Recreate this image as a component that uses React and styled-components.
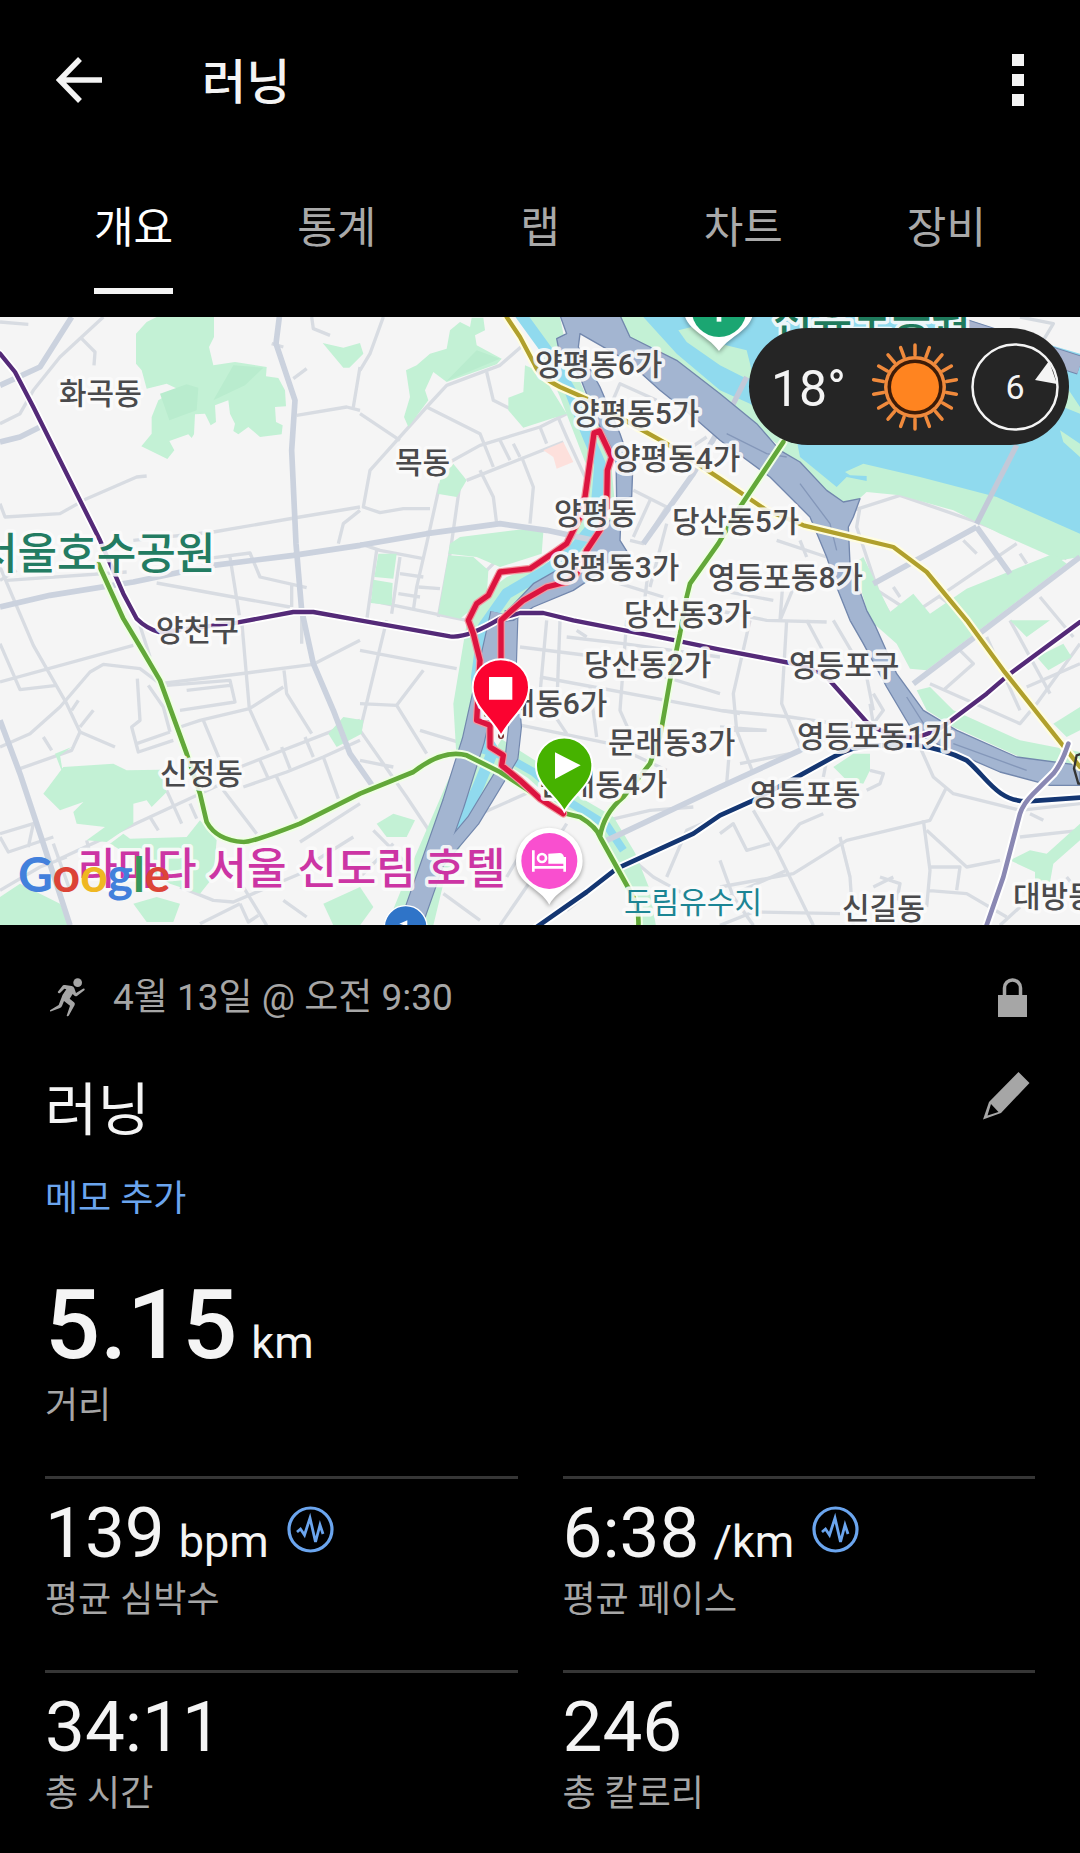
import React, { useState } from "react";
import styled, { createGlobalStyle } from "styled-components";

const GlobalStyle = createGlobalStyle`
  *, *::before, *::after { box-sizing: border-box; }
  body {
    margin: 0;
    background: #000;
    color: #f4f4f4;
    font-family: Roboto, "Noto Sans CJK KR", sans-serif;
  }
  button { border: 0; margin: 0; padding: 0; background: none; color: inherit; font: inherit; cursor: pointer; }
  svg { display: block; }
  h1, h2, p, dl, dd, dt { margin: 0; font-weight: 400; }
`;

const Page = styled.div`
  min-height: 100vh;
  background: #000;
`;

/* ---------- top bar ---------- */

const TopBar = styled.header`
  display: flex;
  align-items: center;
  height: 160px;
  padding: 0 56px;
`;

const IconButton = styled.button`
  display: flex;
  flex: none;
  align-items: center;
  justify-content: center;
  color: #f4f4f4;
`;

const EditButton = styled(IconButton)`
  padding: 0 5px 30px 0;
  color: #a6a6a6;
`;

const ScreenTitle = styled.h1`
  flex: 1;
  margin-left: 98px;
  padding-top: 6px;
  font-size: 48px;
  line-height: 60px;
  font-weight: 500;
`;

const Tabs = styled.nav`
  display: grid;
  grid-template-columns: repeat(5, 1fr);
  height: 157px;
  padding: 0 32px;
`;

const Tab = styled.button`
  display: flex;
  align-items: flex-end;
  justify-content: center;
  padding-bottom: 23px;
`;

const TabLabel = styled.span`
  padding-bottom: 30px;
  border-bottom: 6px solid ${(p) => (p.$active ? "#f4f4f4" : "transparent")};
  color: ${(p) => (p.$active ? "#fff" : "#a9a9a9")};
  font-size: 43px;
  line-height: 60px;
`;

/* ---------- map ---------- */

const MapPanel = styled.section`
  position: relative;
  overflow: hidden;
  background: #f5f5f5;
`;

const MapSvg = styled.svg`
  width: 100%;
  height: auto;
`;

const MapText = styled.text`
  font-family: Roboto, "Noto Sans CJK KR", sans-serif;
  font-size: ${(p) => (p.$large ? 43 : 30)}px;
  font-weight: ${(p) => (p.$regular ? 400 : 500)};
  fill: ${(p) => p.$fill || "#4a4a4c"};
  stroke: #fbfbfb;
  stroke-opacity: 0.9;
  stroke-width: 7px;
  stroke-linejoin: round;
  paint-order: stroke;
`;

const GoogleText = styled.text`
  font-family: Lato, sans-serif;
  font-size: 48px;
  font-weight: 700;
`;

const Weather = styled.div`
  position: absolute;
  top: 11px;
  right: 11px;
  display: flex;
  align-items: center;
  gap: 12px;
  width: 320px;
  height: 117px;
  padding: 0 10px 0 22px;
  border-radius: 59px;
  background: #252525;
`;

const Temperature = styled.span`
  flex: 1;
  padding-top: 4px;
  font-size: 50px;
`;

const Wind = styled.div`
  display: grid;
  place-items: center;
  font-size: 34px;
  font-weight: 400;
  > * { grid-area: 1 / 1; }
`;

/* ---------- activity ---------- */

const Activity = styled.main`
  padding: 43px 45px 33px;
`;

const Row = styled.div`
  display: flex;
  align-items: center;
  justify-content: space-between;
  margin-top: ${(p) => p.$top || 0}px;
`;

const When = styled.p`
  display: flex;
  align-items: center;
  gap: 18px;
  color: #a6a6a6;
  font-size: 37px;
  line-height: 60px;
`;

const LockSlot = styled.span`
  padding: 0 8px 2px 0;
`;

const ActivityName = styled.h2`
  font-size: 57px;
  line-height: 80px;
`;

const NoteButton = styled.button`
  display: block;
  margin-top: 23px;
  color: #6ba5ee;
  font-size: 36px;
  line-height: 50px;
`;

const Stats = styled.dl`
  display: grid;
  grid-template-columns: 1fr 1fr;
  column-gap: 45px;
  row-gap: 45px;
  margin-top: 45px;
`;

const Stat = styled.div`
  display: flex;
  flex-direction: column-reverse;
  justify-content: flex-end;
  ${(p) =>
    p.$hero
      ? "grid-column: 1 / -1;"
      : "border-top: 3px solid #363636; padding-top: 12px;"}
`;

const StatLabel = styled.dt`
  color: #a6a6a6;
  font-size: 36px;
  line-height: 50px;
`;

const StatValue = styled.dd`
  display: flex;
  align-items: baseline;
  gap: 14px;
  font-size: ${(p) => (p.$hero ? 97 : 71)}px;
  font-weight: ${(p) => (p.$hero ? 500 : 400)};
  line-height: ${(p) => (p.$hero ? 112 : 84)}px;
`;

const Unit = styled.span`
  font-size: 45px;
  font-weight: 400;
  line-height: 45px;
`;

const PulseSlot = styled.span`
  align-self: center;
  margin: 0 0 8px 4px;
`;

/* ---------- icons ---------- */

const BackIcon = () => (
  <svg width="48" height="46" viewBox="0 0 48 46" fill="none" stroke="currentColor" strokeWidth="5.5">
    <path d="M24 2 3.500 23 24 44M4 23H46" />
  </svg>
);

const MoreIcon = () => (
  <svg width="12" height="52" viewBox="0 0 12 52" fill="currentColor">
    <path d="M0 0h12v12H0zM0 20h12v12H0zM0 40h12v12H0z" />
  </svg>
);

const RunnerIcon = () => (
  <svg width="50" height="50" viewBox="0 0 150 150" fill="#a6a6a6">
    <circle cx="98" cy="29" r="13" />
    <path d="M38 57 54 37Q56 35 60 36L80 39Q86 40 88 46L93 60 114 47Q120 46 119 51L96 69Q90 71 87 67L83 63 74 77 87 88Q91 91 89 96L72 127Q69 132 65 128L75 98 57 84 51 99Q49 103 45 105L19 115Q14 117 15 112L41 96 50 73Q51 67 56 61L64 49 58 47 45 60Q40 62 38 57Z" />
  </svg>
);

const LockIcon = () => (
  <svg width="29" height="39" viewBox="0 0 29 39">
    <path d="M0 17h29v22H0z" fill="#a6a6a6" />
    <path d="M6.500 18V10a8 8 0 0 1 16 0v8" fill="none" stroke="#a6a6a6" strokeWidth="3.500" />
  </svg>
);

const PencilIcon = () => (
  <svg width="47" height="48" viewBox="0 0 47 48" fill="currentColor" fillRule="evenodd">
    <path d="M35.500 0 46.500 11 18 41 0 47.500 6 30ZM8 32 4.500 43.500 15.500 40Z" />
  </svg>
);

const PulseIcon = () => (
  <svg width="47" height="47" viewBox="0 0 47 47" fill="none" stroke="#6ba5ee">
    <circle cx="23.500" cy="23.500" r="21.500" strokeWidth="3.200" />
    <path d="M10 26 13.500 23 17.500 29 23 12 28.500 36 33 19 36 28" strokeWidth="2.800" />
  </svg>
);

const SunIcon = () => (
  <svg width="88" height="88" viewBox="-44 -44 88 88" role="img" aria-label="맑음">
    {Array.from({ length: 18 }, (_, i) => (
      <path key={i} d="M0-32V-42" transform={`rotate(${i * 20})`} stroke="#f08a3c" strokeWidth="3.500" strokeLinecap="round" />
    ))}
    <circle r="31" fill="#f08a3c" />
    <circle r="27.500" fill="#3d1c08" />
    <circle r="24" fill="#ff8420" />
  </svg>
);

const CompassIcon = () => (
  <svg width="88" height="88" viewBox="-44 -44 88 88">
    <circle r="42.500" fill="none" stroke="#f4f4f4" strokeWidth="2.500" />
    <path d="M34-26 42-3 20-7Z" fill="#f4f4f4" />
  </svg>
);

/* ---------- map data ---------- */

const PARKS = [
  "M408 70 440 35 470 20H642V80L627 110 640 165 705 155 800 170 798 198 835 203 855 240 858 288 825 290 828 335 848 345 845 372 780 380 745 350 715 372 700 362 705 340 690 310 685 270 645 285 648 335 632 345 615 310 585 312 582 372 575 383 565 372 508 392 523 420 502 446 424 408 455 370V320L475 270 532 235 500 220 440 235 425 180 408 160Z",
  "M968 98 1030 112 1080 98 1090 130 1048 172 1030 172Z",
  "M1350 60 1380 35 1410 50 1415 22H1450L1455 60 1425 75 1430 105 1505 145 1490 162 1340 215 1300 185 1275 240 1285 270 1225 350 1212 320 1230 260 1218 180 1250 165 1290 130 1340 115Z",
  "M1575 165 1622 185 1700 310 1570 352 1525 300V262L1570 245Z",
  "M1320 510 1360 460 1400 510 1370 560 1312 550Z",
  "M1350 700 1380 680 1580 655 1630 665 1625 730 1500 770 1430 740 1345 730Z",
  "M1345 735 1420 740 1465 780 1460 860 1380 925 1315 910Z",
  "M1135 730H1190L1180 805 1123 800ZM1120 808 1178 818 1175 885 1113 878Z",
  "M130 1450 190 1370 340 1360 380 1380 480 1378 500 1445 455 1490 440 1470 400 1480V1540L320 1595 260 1590 315 1550 230 1540 220 1505 250 1475 180 1500ZM165 1330 215 1310 180 1335 190 1395Z",
  "M330 1600 370 1570 390 1585 560 1580 600 1530 650 1590 640 1700 600 1750 510 1720 380 1630Z",
  "M0 1760 60 1720 180 1780 210 1845H0ZM400 1780 470 1760 540 1780 520 1835H440Z",
  "M970 1780 1080 1730 1120 1790 1080 1845H1000Z",
  "M985 1270 1030 1220 1090 1230 1085 1270 1010 1310Z",
  "M1130 1540 1180 1510 1245 1530 1220 1580 1160 1580Z",
  "M2670 905 2740 850 2790 910 2900 835 3160 730 3200 760 2780 1080 2730 1075 2690 1000 2610 930 2560 760 2590 740Z",
  "M3030 930H3150L3080 980ZM3110 1040 3190 1000 3215 1040 3145 1080ZM3160 1240 3240 1190V1260L3200 1280Z",
  "M2750 1140 2790 1130 2860 1200 3060 1290 3240 1325V1368L3070 1345 2860 1250 2780 1200Z",
  "M2500 1370 2560 1330 2610 1330V1380L2590 1420 2540 1410Z",
  "M3030 1650 3090 1620 3140 1630 3240 1540V1590L3160 1660 3150 1715H3105V1685Z",
];

const MAJOR_ROADS = [
  "M0 890 150 855 400 815 640 765 880 735 1080 705 1280 670 1500 640 1640 660 1780 690",
  "M838 20 828 100 885 270 875 420 888 700 905 900 940 1060 1000 1200 1050 1330 1120 1430",
  "M0 1230 60 1390 130 1600 210 1845",
  "M0 225 120 170 215 20M0 395 60 380 120 350",
  "M2160 1430 2400 1320 2560 1240M1800 1600 2160 1430",
  "M2620 820 2930 650M2930 650 3030 790",
  "M2740 1120 3240 740M1930 700 2080 490 2150 370",
];

const ROADS = [
  "M0 1310 90 1270 180 1190 270 1085 310 1062 420 1075 480 1120 740 1088 940 1062 1080 990",
  "M0 35 85 42M310 20 180 140 100 240 60 310 0 340M245 85 285 125 282 165",
  "M0 580 15 620 180 610 260 565 410 500 440 497",
  "M400 690 640 665 900 620 1080 590M20 810 380 785M0 810 50 780",
  "M935 20 940 55 990 75M815 100 850 110M880 205 920 175M890 315 1040 290 1080 300M1060 290 1080 170",
  "M1080 600 1030 640 1015 700M620 745 750 728 780 800 920 832M690 740 718 915M470 818 700 860 870 890M875 825V890M905 920V1000",
  "M0 770 100 1005 200 1180 240 1265M0 1000 60 1138 170 1125M0 1115 400 1005M415 930 450 1040",
  "M240 1265 345 1310M240 1265 215 1320 60 1375M215 1200 235 1170M240 1250 280 1200M130 1280 155 1320",
  "M412 1105 420 1230 395 1250 415 1325 520 1290M410 1300 510 1265M445 1125 490 1190 510 1265",
  "M500 1125 690 1110 705 1175 540 1200M560 1140 690 1125M725 930 748 1195 600 1230 540 1250",
  "M852 1080 860 1150 935 1270M748 1195 850 1130M748 1195 805 1320M610 1230 660 1350",
  "M720 1370 1080 1230M730 1430 860 1385 970 1340 1080 1290M780 1350 805 1405M845 1310 870 1375M915 1280 940 1340M970 1340 1015 1465M830 1400 890 1525",
  "M170 1650 720 1395 M260 1590 270 1630M450 1520 475 1560M500 1440 545 1540M570 1480 590 1525M670 1440 770 1570",
  "M0 1570 100 1540 85 1610M0 1580 25 1625 160 1580M0 1740 120 1670 200 1640M160 1600 210 1740",
  "M900 1595 1080 1480M540 1730 640 1770 700 1775 900 1690M720 1780 745 1835 775 1815M730 1730 800 1845M850 1770 920 1820M900 1680 1060 1580M600 1840 720 1780",
  "M1150 20 1110 130 1080 180M1080 310 1200 390M1580 95 1500 165 1340 225 1280 290 1110 480 1090 590 1140 607 1210 595 1290 595",
  "M1280 290 1440 370 1480 470M1460 185 1480 270 1540 300M1350 455 1440 405 1620 350 1700 310M1400 510 1690 395M1320 520 1280 700 1250 830 1240 900M1380 520 1350 730 1315 920",
  "M1440 480 1480 560 1490 640M1565 440 1600 530 1590 640M1500 390 1530 450M1620 350 1640 400M1540 400 1560 440M1635 230 1700 380 1755 500",
  "M1080 700 1140 720 1270 745M1130 720 1100 930M1200 740 1175 910M1200 790 1270 800M1195 850 1260 860M1255 830 1320 835M1110 870 1400 930M1460 780 1500 740 1620 700",
  "M2240 570 2300 600M1830 290 1860 220 1970 270M1900 540 2000 590 1930 700 1890 690M1950 570 1900 680M2060 420 2120 380",
  "M2100 890 2300 930 2480 935M1700 980 1870 1000 2160 1040M1560 1010 1800 1040 2160 1150M1620 1100 2160 1200 2370 1220 2640 1260",
  "M1640 930 1620 1150 1700 1270M1880 930 1860 1200 1900 1290M1680 930 1670 1200M1770 1130 1790 1280M1540 1240 1830 1300 2000 1380M1730 960 1760 980",
  "M1840 700 1860 820 1990 860M1950 740 1930 900M2000 640 1950 830M2330 690 2480 740M2350 800 2340 930M2400 690 2420 740M2410 760 2340 930M2160 840 2320 870",
  "M2250 930 2200 1150 2210 1260 2260 1390M2360 930 2345 1180 2400 1310M2420 930 2500 1080M2500 930 2600 1100 2620 1200M2200 1260 2290 1260M2160 1250 2300 1260",
  "M2190 1300 2180 1420M2220 1360 2370 1330M2160 1200 2220 1210",
  "M1080 1020 1370 1075M1160 930 1080 1260M1080 1180 1190 1185 1280 1330M1190 1185 1270 1080M1260 1260 1390 1300 1620 1400",
  "M1080 1260 1220 1460 1300 1580M1080 1350 1180 1370M1420 1520 1600 1440M1700 1540 1600 1700 1500 1845M1520 1700 1580 1600M1780 1540 1950 1500 2080 1490",
  "M2000 1700 2060 1560 2200 1500M1700 1800 1880 1660 2100 1560M1900 1650 1960 1700 2050 1750M1330 1750 1440 1830M1120 1560 1240 1680M1180 1600 1080 1700",
  "M2260 1500 2330 1620 2440 1845M2160 1570 2200 1540 2240 1620 2310 1600M2330 1620 2400 1540 2470 1510M2160 1730 2380 1690 2540 1590 2790 1530 2840 1430",
  "M2520 1580 2550 1700 2560 1845M2160 1650 2200 1760 2260 1845M2160 1845 2260 1805 2520 1810M2160 1770 2360 1680M2760 1310 2800 1400 2860 1450 3060 1500 3240 1480",
  "M2770 1530 2790 1680 2780 1790M2780 1560 2900 1670 3000 1650M2790 1670H2880L2870 1740M2780 1740 2900 1750 3020 1820M3060 1580 3240 1560M3090 1510 3130 1530",
  "M2580 590 2570 650 2640 860 2680 930 2760 1070M2560 600 2700 555 2930 635 3100 700 3200 745",
  "M2600 820 2740 910 2830 850 3050 700M2680 830 2700 860M2890 690 2930 730M3060 730 3080 760M2820 860 2900 920M2790 1120 3060 1240 3110 1180 3240 1000",
  "M2880 1020 2920 1060 2830 1140M2960 980 3060 1200M3030 930 3150 1150M3120 860 3220 980M3080 1130 3240 1060M2620 1150 2650 1200 2620 1240 2610 1180",
  "M2480 1350 2470 1400M2610 1380 2650 1390 2640 1420 2600 1440M2640 1700 2700 1720 2690 1770M2620 1730 2680 1700M3200 1700 3240 1750M3000 1845 3060 1790",
];

const GREEN_LINE =
  "M295 760 370 925 430 1025 480 1110 560 1330 600 1450 620 1535Q650 1590 730 1595 760 1595 900 1540L1080 1450 1240 1385Q1330 1315 1400 1335L1500 1385 1600 1450 1690 1508 1740 1520Q1790 1550 1800 1580L1850 1670 1900 1760Q1918 1800 1915 1850M2350 395 2220 590 2155 700 2070 820 2060 860 2040 970 2010 1110 1980 1280 1950 1360 1870 1460Q1810 1510 1800 1580";
const PURPLE_LINE =
  "M0 130 45 185 100 290 200 490 300 690 370 850 410 925Q440 955 480 966L710 937 880 905H940L1080 930 1350 978Q1400 985 1500 925L1560 908H1630L1720 930 2000 985 2160 1018 2370 1058Q2440 1070 2480 1100L2600 1235Q2650 1275 2740 1282 2800 1270 2840 1240L2960 1150 3030 1090 3240 935";
const OLIVE_LINE =
  "M1520 20 1560 80 1605 165Q1620 200 1680 230L1760 265 1910 350 2000 400 2160 505 2300 600 2410 645 2680 710 2780 785 2900 930 3010 1080 3240 1370";
const NAVY_LINE =
  "M1610 1850 1760 1745 1850 1675 2080 1570 2160 1515 2260 1470 2400 1395 2500 1340Q2560 1305 2640 1305H2750Q2830 1315 2900 1350C2960 1400 2990 1472 3080 1473L3240 1462";
const LILAC_LINE = "M2958 1850 3010 1700 3060 1510Q3070 1480 3100 1450L3160 1390Q3185 1360 3205 1300";
const ROUTE =
  "M1503 1060V930L1530 905 1570 870 1640 830 1700 815 1730 790 1760 720 1800 660 1820 600 1822 480 1835 440 1798 362 1782 368 1755 560 1740 620 1700 700 1650 735 1590 775 1500 785 1465 855 1430 880 1405 930 1420 970 1440 1050 1430 1230 1470 1245V1310L1510 1335 1505 1365 1560 1410 1620 1465 1690 1510";

const PLACES = [
  [59, 87, "화곡동"],
  [395, 156, "목동"],
  [535, 58, "양평동6가"],
  [572, 107, "양평동5가"],
  [613, 152, "양평동4가"],
  [554, 207, "양평동"],
  [552, 261, "양평동3가"],
  [672, 215, "당산동5가"],
  [708, 271, "영등포동8가"],
  [624, 308, "당산동3가"],
  [584, 358, "당산동2가"],
  [789, 359, "영등포구"],
  [480, 397, "문래동6가"],
  [608, 436, "문래동3가"],
  [540, 478, "문래동4가"],
  [797, 430, "영등포동1가"],
  [750, 488, "영등포동"],
  [160, 467, "신정동"],
  [156, 324, "양천구"],
  [842, 602, "신길동"],
  [1013, 590, "대방동"],
];

function CityMap() {
  return (
    <MapSvg viewBox="0 0 1080 608" role="img" aria-label="러닝 경로 지도">
      <svg width="1080" height="608" viewBox="0 20 3240 1824" fill="none" strokeLinejoin="round">
        <rect y="20" width="3240" height="1830" fill="#f5f5f5" />
        <g stroke="#d8dce2" strokeWidth="10">
          {ROADS.map((d) => (
            <path key={d} d={d} />
          ))}
        </g>

        {/* river banks and water */}
        <path d="M1860 20H3240V740L3180 750 3000 670 2860 600 2700 555 2600 545 2550 590H2480L2330 400 2100 230 1900 120Z" fill="#c3f1d5" />
        <path d="M1930 20H3240V670L2990 560 2760 500 2590 460 2535 485 2550 495 2600 497V512L2540 500 2510 530 2400 440 2390 390 2250 280 2160 240 2030 130Z" fill="#90daee" />
        <path d="M2035 60 2075 50 2160 100 2240 120 2260 200 2240 205 2160 165 2060 95ZM3180 360 3240 400V440L3190 395ZM3200 230 3240 290V310L3190 290Z" fill="#c3f1d5" />
        <path d="M2880 20H3240V130L3000 60Z" fill="#f5f5f5" />
        <path d="M3060 20 3160 40 3130 90" stroke="#d5dae0" strokeWidth="10" />
        <path d="M2880 50 3240 165" stroke="#7287ad" strokeWidth="58" />
        <path d="M2880 50 3240 165" stroke="#a8b4cf" strokeWidth="52" />
        <path d="M3050 405 2930 640M2240 200 2190 300" stroke="#c3c9d8" strokeWidth="16" />

        {PARKS.map((d) => (
          <path key={d} d={d} fill="#c3f1d5" />
        ))}
        <path d="M480 250 560 222 595 232 590 300 508 330ZM700 165 790 172 735 225 640 270Z" fill="#b9ecce" />
        <path d="M1430 120 1500 145 1340 212Z" fill="#b9ecce" />
        <path d="M1630 420 1690 395 1720 455 1670 475 1660 440Z" fill="#fde0dc" />
        <path d="M1560 20H1680L1700 120 1760 260 1830 420 1850 640 1780 740 1560 870 1480 960 1460 1200 1480 1330 1530 1380 1440 1480 1330 1720 1300 1845H1160L1240 1650 1370 1350 1360 1180 1400 940 1440 860 1520 800 1660 750 1740 640 1765 480 1680 260 1620 120Z" fill="#c3f1d5" />
        <path d="M1560 10 1640 120 1710 240 1765 380 1800 460 1785 640 1720 720 1640 780 1520 850 1450 950 1430 1100 1440 1260 1480 1320 1430 1440 1330 1640 1210 1845" stroke="#90daee" strokeWidth="34" />
        <path d="M1490 1310 1600 1380 1700 1470 1820 1540 1880 1640 1920 1740 1940 1850" stroke="#c3f1d5" strokeWidth="56" />
        <path d="M1440 1315 1520 1340 1600 1385 1700 1470 1820 1545 1870 1620" stroke="#90daee" strokeWidth="24" />

        <g stroke="#cbd2de" strokeWidth="17">
          {MAJOR_ROADS.map((d) => (
            <path key={d} d={d} />
          ))}
        </g>

        {/* expressways */}
        <path d="M1535 900 1530 1060 1545 1250 1535 1340 1420 1530 1310 1660" stroke="#7287ad" strokeWidth="42" />
        <path d="M1505 910 1420 1290 1360 1480 1230 1850" stroke="#7287ad" strokeWidth="70" />
        <path d="M1535 900 1530 1060 1545 1250 1535 1340 1420 1530 1310 1660" stroke="#a3b5d1" strokeWidth="35" />
        <path d="M1505 910 1420 1290 1360 1480 1230 1850" stroke="#a3b5d1" strokeWidth="63" />
        <g fill="#a3b5d1" stroke="#7287ad" strokeWidth="4">
          <path d="M1680 15H1860L1890 80 2030 150 2160 250 2270 340 2340 420 2400 455 2480 540 2530 575 2580 565 2560 620 2545 650 2550 760 2600 900 2625 945 2690 1090 2770 1200 2870 1260 3050 1340 3240 1365V1425H3150L3000 1385 2850 1320 2740 1265 2660 1130 2590 1000 2550 930 2510 830 2480 740 2430 620 2310 500 2160 390 2080 320 1980 240 1880 150 1740 70 1735 110 1800 230 1860 370 1898 480 1895 560 1850 570 1848 440 1790 330 1740 200 1700 140 1675 110 1670 85 1700 70Z" />
          <path d="M1830 630 1862 640 1860 690 1885 730 1720 840 1600 890 1540 930 1490 935 1600 820 1740 740Z" />
        </g>
        <path d="M2180 370 2300 430 2360 440M2400 520 2490 640 2510 720M2720 1160 2790 1270M2860 1300 3080 1380" stroke="#8497b9" strokeWidth="4" />

        {/* subway lines */}
        <g strokeLinecap="round">
          <path d={PURPLE_LINE} stroke="#fff" strokeWidth="24" />
          <path d={PURPLE_LINE} stroke="#542a78" strokeWidth="13" />
          <path d={OLIVE_LINE} stroke="#fffde0" strokeWidth="26" />
          <path d={OLIVE_LINE} stroke="#b0a02c" strokeWidth="13" />
          <path d={NAVY_LINE} stroke="#fff" strokeWidth="26" />
          <path d={NAVY_LINE} stroke="#143672" strokeWidth="14" />
          <path d={LILAC_LINE} stroke="#fff" strokeWidth="26" />
          <path d={LILAC_LINE} stroke="#8a88b3" strokeWidth="14" />
          <path d={GREEN_LINE} stroke="#efffe4" strokeWidth="26" />
          <path d={GREEN_LINE} stroke="#62a839" strokeWidth="14" />
          <path d={ROUTE} stroke="#f3979f" strokeWidth="23" />
          <path d={ROUTE} stroke="#dc143f" strokeWidth="16" />
        </g>
        <path d="M3245 1330 3230 1335 3222 1375 3235 1420H3245" stroke="#333" strokeWidth="7" />
      </svg>

      <MapText x="773" y="18" $large $fill="#1f7a5c">선유도공원</MapText>
      <MapText x="-22" y="252" $large $fill="#237c62">서울호수공원</MapText>
      <MapText x="78" y="567" $large $fill="#cc35a4">라마다 서울 신도림 호텔</MapText>
      <MapText x="624" y="596" $regular $fill="#1c8594">도림유수지</MapText>
      {PLACES.map(([x, y, name]) => (
        <MapText key={name} x={x} y={y}>{name}</MapText>
      ))}

      <svg width="1080" height="608" viewBox="0 20 3240 1824">
        {/* point of interest pins */}
        <g style={{ filter: "drop-shadow(0 6px 6px rgba(0,0,0,.35))" }}>
          <path d="M2050-10C2050 60 2120 70 2157 122 2195 70 2262 60 2262-10Z" fill="#fff" />
          <path d="M1648 1783C1620 1730 1548 1722 1548 1652A100 100 0 0 1 1748 1652C1748 1722 1676 1730 1648 1783Z" fill="#fff" />
        </g>
        <circle cx="2157" cy="-2" r="82" fill="#1ba672" />
        <path d="M2150 10H2164V34H2150Z" fill="#fff" />
        <circle cx="1648" cy="1652" r="84" fill="#f94fcf" />
        <g fill="none" stroke="#fff" strokeWidth="8">
          <path d="M1600 1620V1684M1600 1671H1694M1694 1684V1640" />
          <circle cx="1626" cy="1643" r="12" />
        </g>
        <path d="M1645 1630 1680 1628Q1692 1630 1692 1644V1660H1645Z" fill="#fff" />
        <circle cx="1217" cy="1850" r="64" fill="#2f74c8" stroke="#fff" strokeWidth="4" />
        <path d="M1198 1840 1222 1830V1850H1210V1844Z" fill="#fff" />

        {/* finish and start pins */}
        <circle cx="1503" cy="1277" r="9" fill="#7d3030" />
        <g stroke="#fff" strokeWidth="6">
          <path d="M1503 1277C1478 1225 1418 1190 1418 1131A84 84 0 0 1 1587 1131C1587 1190 1528 1225 1503 1277Z" fill="#fb0330" />
          <path d="M1693 1504C1668 1455 1608 1425 1608 1366A84 84 0 0 1 1777 1366C1777 1425 1718 1455 1693 1504Z" fill="#46b200" />
        </g>
        <path d="M1467 1100H1537V1168H1467ZM1665 1326 1742 1365 1665 1406Z" fill="#fff" />
      </svg>

      <GoogleText x="18" y="575">
        <tspan fill="#4280dc">G</tspan>
        <tspan fill="#dc4437">o</tspan>
        <tspan fill="#efb722">o</tspan>
        <tspan fill="#4280dc">g</tspan>
        <tspan fill="#38985a">l</tspan>
        <tspan fill="#dc4437">e</tspan>
      </GoogleText>
    </MapSvg>
  );
}

const TABS = ["개요", "통계", "랩", "차트", "장비"];

const STATS = [
  { value: "5.15", unit: "km", label: "거리", hero: true },
  { value: "139", unit: "bpm", label: "평균 심박수", chart: true },
  { value: "6:38", unit: "/km", label: "평균 페이스", chart: true },
  { value: "34:11", label: "총 시간" },
  { value: "246", label: "총 칼로리" },
];

export default function App() {
  const [tab, setTab] = useState(TABS[0]);

  return (
    <Page>
      <GlobalStyle />
      <TopBar>
        <IconButton type="button" aria-label="뒤로">
          <BackIcon />
        </IconButton>
        <ScreenTitle>러닝</ScreenTitle>
        <IconButton type="button" aria-label="더보기">
          <MoreIcon />
        </IconButton>
      </TopBar>

      <Tabs>
        {TABS.map((name) => (
          <Tab key={name} type="button" aria-pressed={name === tab} onClick={() => setTab(name)}>
            <TabLabel $active={name === tab}>{name}</TabLabel>
          </Tab>
        ))}
      </Tabs>

      <MapPanel>
        <CityMap />
        <Weather>
          <Temperature>18°</Temperature>
          <SunIcon />
          <Wind>
            <CompassIcon />
            <span>6</span>
          </Wind>
        </Weather>
      </MapPanel>

      <Activity>
        <Row>
          <When>
            <RunnerIcon />
            <span>4월 13일 @ 오전 9:30</span>
          </When>
          <LockSlot>
            <LockIcon />
          </LockSlot>
        </Row>
        <Row $top={43}>
          <ActivityName>러닝</ActivityName>
          <EditButton type="button" aria-label="이름 편집">
            <PencilIcon />
          </EditButton>
        </Row>
        <NoteButton type="button">메모 추가</NoteButton>
        <Stats>
          {STATS.map((s) => (
            <Stat key={s.label} $hero={s.hero}>
              <StatLabel>{s.label}</StatLabel>
              <StatValue $hero={s.hero}>
                {s.value}
                {s.unit && <Unit>{s.unit}</Unit>}
                {s.chart && (
                  <PulseSlot>
                    <PulseIcon />
                  </PulseSlot>
                )}
              </StatValue>
            </Stat>
          ))}
        </Stats>
      </Activity>
    </Page>
  );
}
